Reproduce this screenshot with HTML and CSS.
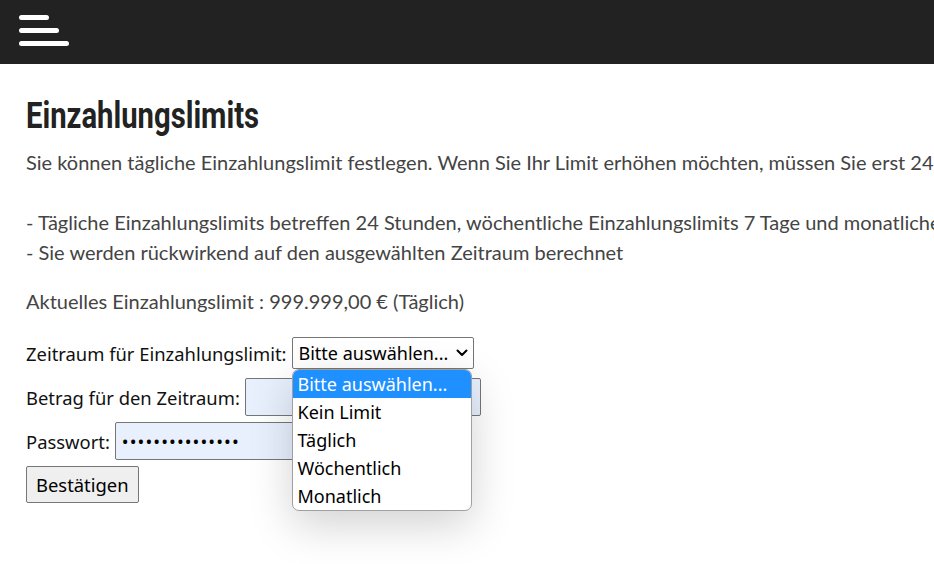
FILE: index.html
```html
<!DOCTYPE html>
<html lang="de">
<head>
    <meta charset="UTF-8">
    <meta name="viewport" content="width=device-width, initial-scale=1.0">
    <title>Einzahlungslimits</title>
    <link rel="stylesheet" href="styles.css">
</head>
<body>
    <header class="topbar">
        <button class="menu-toggle" type="button" aria-label="Menü">
            <span class="bar bar-short"></span>
            <span class="bar bar-mid"></span>
            <span class="bar bar-long"></span>
        </button>
    </header>

    <main class="content">
        <h1 class="page-title"><span>Einzahlungslimits</span></h1>

        <p class="intro">
            Sie können tägliche Einzahlungslimit festlegen. Wenn Sie Ihr Limit erhöhen möchten, müssen Sie erst 24<br>
            <br>
            - Tägliche Einzahlungslimits betreffen 24 Stunden, wöchentliche Einzahlungslimits 7 Tage und monatliche<br>
            - Sie werden rückwirkend auf den ausgewählten Zeitraum berechnet
        </p>

        <p class="current">Aktuelles Einzahlungslimit : 999.999,00 € (Täglich)</p>

        <form class="limit-form">
            <div class="row row-select">
                <label>Zeitraum für Einzahlungslimit:</label>
                <div class="select-wrap">
                    <div class="select-box">
                        <span>Bitte auswählen...</span>
                        <svg class="chevron" width="12" height="8" viewBox="0 0 12 8">
                            <path d="M1.5 1.5 L6 6 L10.5 1.5" fill="none" stroke="#000" stroke-width="2" stroke-linecap="round" stroke-linejoin="round"/>
                        </svg>
                    </div>
                    <!-- Liste geöffnet -->
                    <ul class="options">
                        <li class="selected">Bitte auswählen...</li>
                        <li>Kein Limit</li>
                        <li>Täglich</li>
                        <li>Wöchentlich</li>
                        <li>Monatlich</li>
                    </ul>
                </div>
            </div>
            <div class="row">
                <label for="amount">Betrag für den Zeitraum:</label>
                <input type="text" id="amount" class="field">
            </div>
            <div class="row">
                <label for="password">Passwort:</label>
                <input type="password" id="password" class="field" value="passwortgeheim1">
            </div>
            <div class="row">
                <button type="button" class="submit">Bestätigen</button>
            </div>
        </form>
    </main>
</body>
</html>
```

FILE: styles.css
```css
/* Allgemein */
body {
    margin: 0;
    min-height: 100vh;
    background-color: #ffffff;
}

/* Kopfzeile */
.topbar {
    height: 64px;
    background-color: #222222;
    display: flex;
    align-items: center;
    padding-left: 19px;
}

.menu-toggle {
    display: flex;
    flex-direction: column;
    gap: 8px;
    padding: 0;
    margin: 0 0 4px;
    background: none;
    border: none;
}

.bar {
    display: block;
    height: 5px;
    border-radius: 3px;
    background-color: #ffffff;
}

.bar-short { width: 30px; }
.bar-mid { width: 40px; }
.bar-long { width: 50px; }

/* Inhalt */
.content {
    padding: 0 26px;
    white-space: nowrap;
}

.page-title {
    margin: 28px 0 7px;
    font-family: Roboto, sans-serif;
    font-size: 37px;
    font-weight: bold;
    color: #222222;
    line-height: 48px;
}

.page-title span {
    display: inline-block;
    transform: scaleX(0.79);
    transform-origin: left center;
}

.intro,
.current {
    font-family: Lato, sans-serif;
    font-size: 20px;
    line-height: 30px;
    color: #444444;
    margin: 0;
}

.current {
    margin: 19px 0 21px;
}

/* Formular */
.limit-form {
    font-family: "Noto Sans", sans-serif;
    font-size: 18.4px;
    color: #111111;
}

.row {
    display: flex;
    align-items: center;
    gap: 5px;
    margin-bottom: 6px;
}

.row-select {
    margin-bottom: 9px;
}

.select-wrap {
    position: relative;
}

.select-box {
    display: flex;
    align-items: center;
    justify-content: space-between;
    width: 182px;
    height: 32px;
    box-sizing: border-box;
    padding: 0 5px 0 6px;
    border: 1px solid #767676;
    border-radius: 2px;
    background-color: #ffffff;
    color: #000000;
    font-size: 18px;
}

.field {
    width: 236px;
    height: 38px;
    box-sizing: border-box;
    border: 1px solid #767676;
    border-radius: 2px;
    background-color: #e8f0fe;
    font-family: "Noto Sans", sans-serif;
    font-size: 18px;
    padding: 0 6px;
    letter-spacing: 1.1px;
}

.submit {
    height: 37px;
    padding: 0 9px;
    font-family: "Noto Sans", sans-serif;
    font-size: 18.4px;
    color: #000000;
    background-color: #efefef;
    border: 1px solid #767676;
    border-radius: 2px;
}

/* Geöffnete Auswahlliste */
.options {
    position: absolute;
    top: 32px;
    left: 0;
    width: 178px;
    margin: 0;
    padding: 0;
    list-style: none;
    background-color: #ffffff;
    border: 1px solid #a0a0a0;
    border-radius: 7px;
    box-shadow: 0 14px 44px rgba(0, 0, 0, 0.18);
    overflow: hidden;
    z-index: 10;
    font-size: 18px;
}

.options li {
    height: 28px;
    line-height: 28px;
    padding: 0 5px;
    color: #000000;
}

.options li.selected {
    background-color: #1e90ff;
    color: #ffffff;
}
```
